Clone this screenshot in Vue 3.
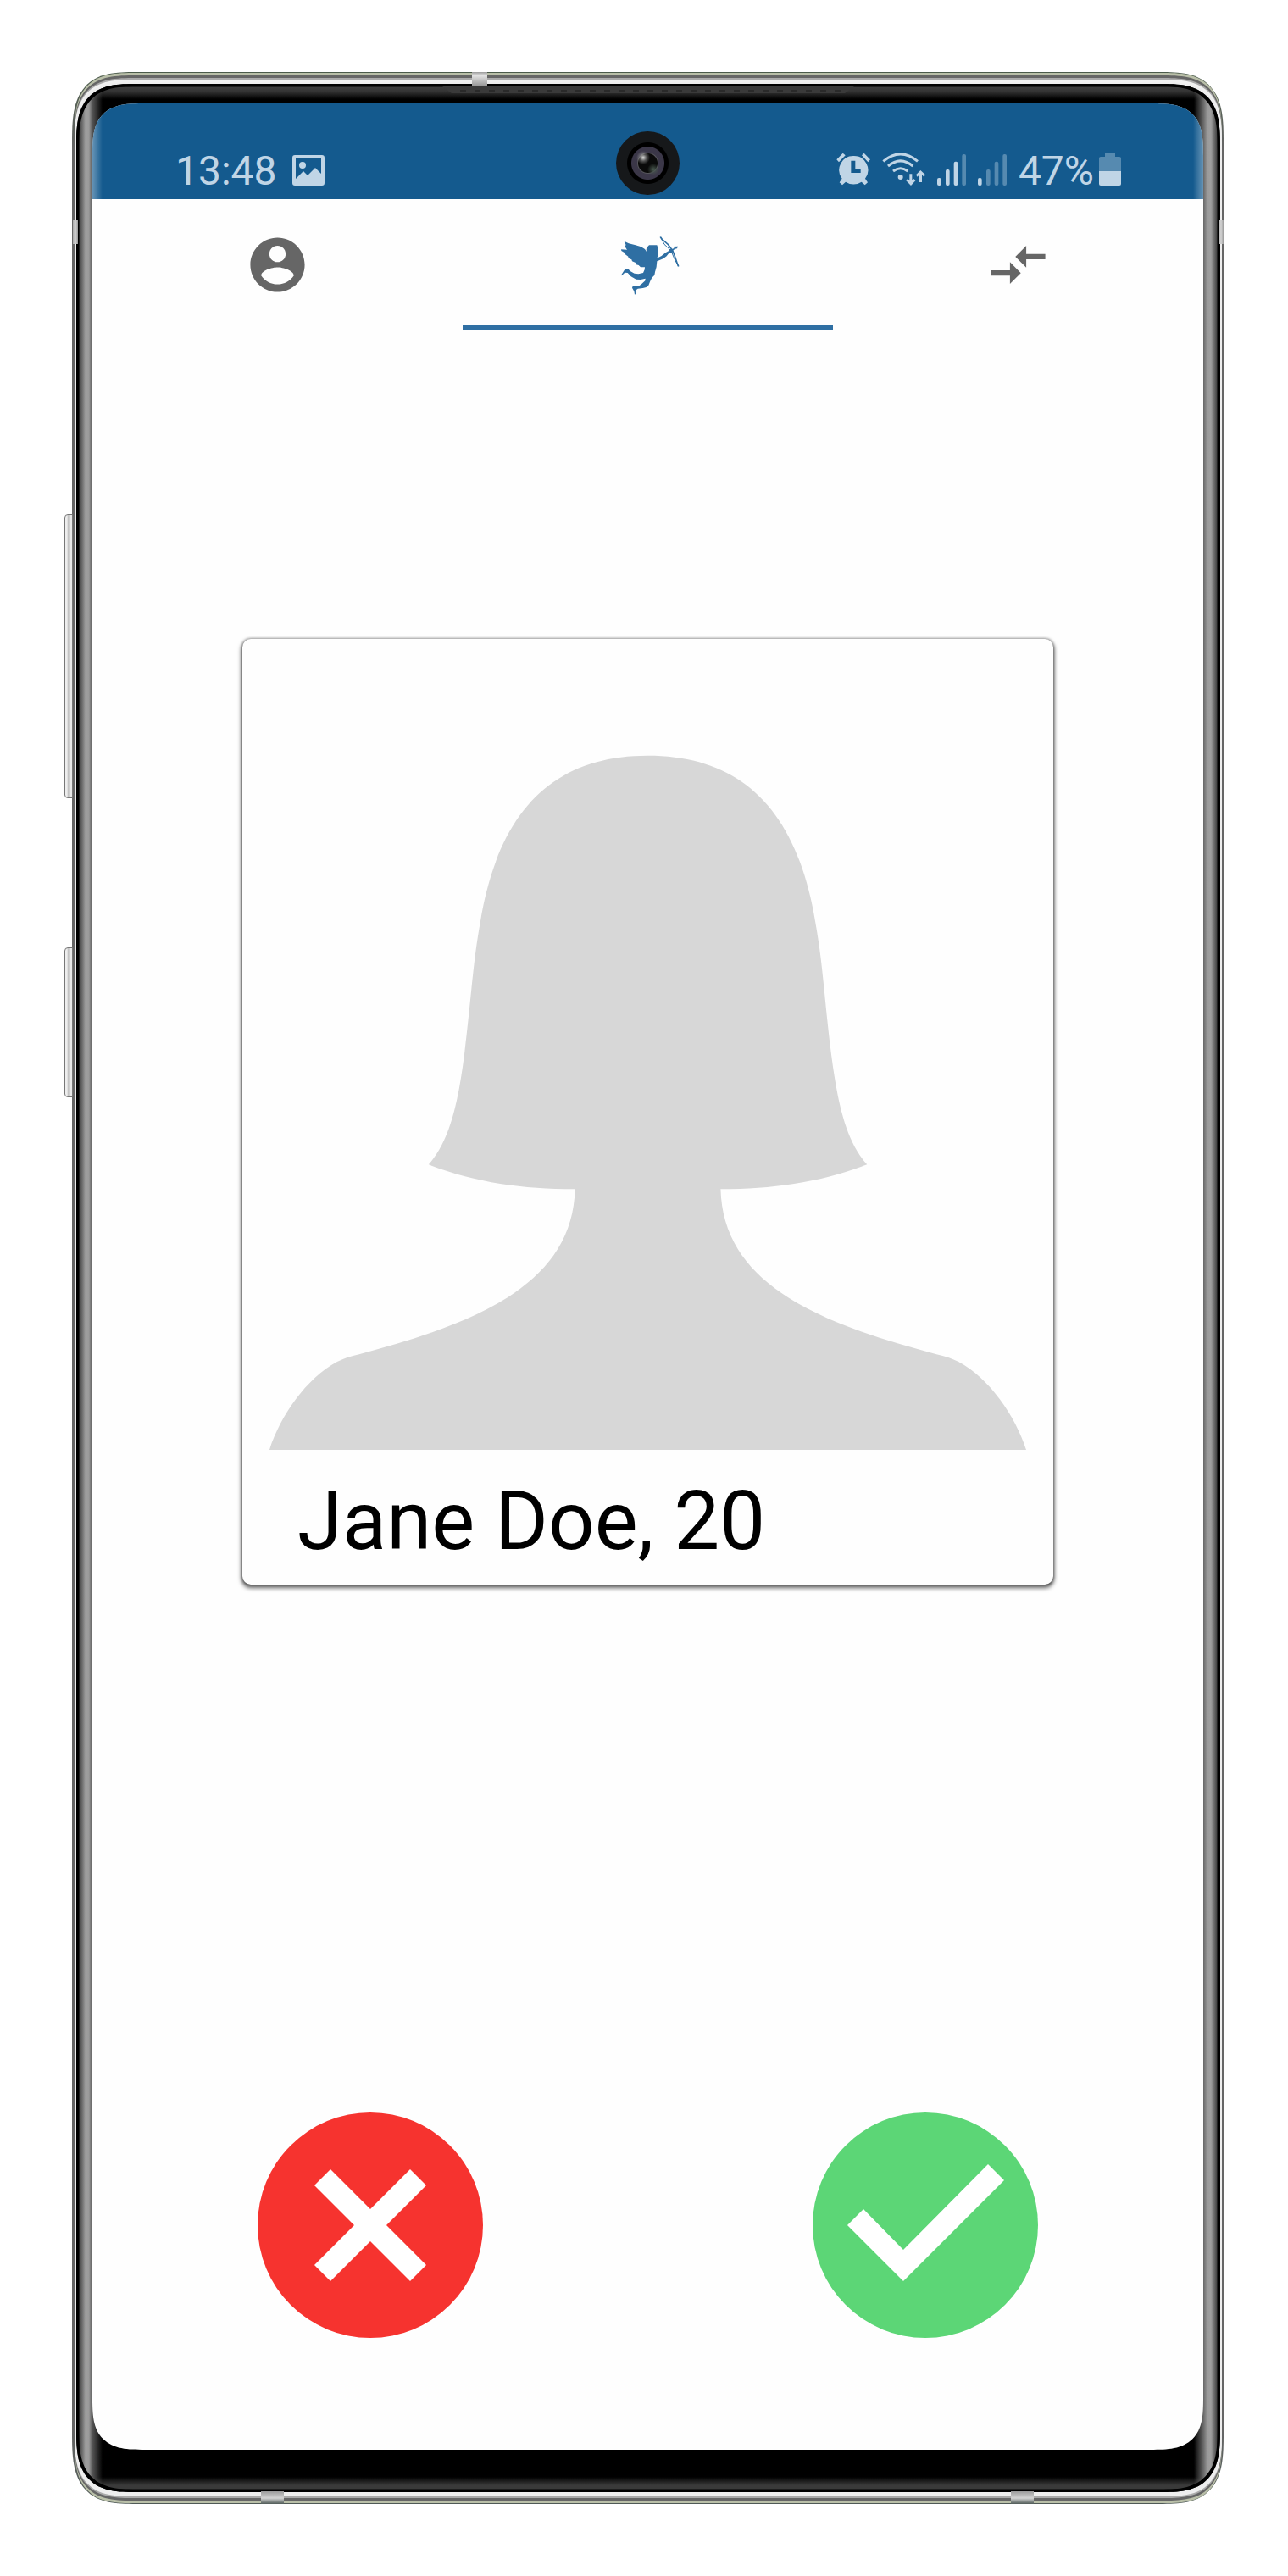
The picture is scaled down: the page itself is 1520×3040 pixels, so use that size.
<script setup>
import { ref } from 'vue'

const status = { time: '13:48', battery: '47%' }
const profile = { name: 'Jane Doe', age: 20 }
const tabs = [
  { id: 'profile', label: 'Profile' },
  { id: 'discover', label: 'Discover' },
  { id: 'matches', label: 'Matches' }
]
const active = ref('discover')
</script>

<template>
  <div class="stage">
    <div class="phone">
      <span class="key volume"></span>
      <span class="key power"></span>

      <div class="glass">
        <div class="screen">
          <header class="status">
            <div class="group">
              <span class="text">{{ status.time }}</span>
              <svg class="photo" viewBox="0 0 38 36" aria-hidden="true">
                <path fill-rule="evenodd" d="M3 0H35Q38 0 38 3V33Q38 36 35 36H3Q0 36 0 33V3Q0 0 3 0ZM4 4V28L13 19L18 24L27 15L34 22V4Z" />
                <circle cx="12" cy="12" r="4" />
              </svg>
            </div>
            <div class="group">
              <svg class="alarm" viewBox="78 90 120 117" aria-hidden="true">
                <path d="M79 115L101 92L110 100L87 124ZM198 115L176 92L168 100L190 124Z" />
                <path fill-rule="evenodd" d="M139 102A50 50 0 0 1 180 182L189 196L179 205L167 194A50 50 0 0 1 111 194L99 205L89 196L98 182A50 50 0 0 1 139 102ZM130 119V162H164V150H145V119Z" />
              </svg>
              <svg class="wifi" viewBox="243 90 153 117" aria-hidden="true">
                <g class="arc">
                  <path d="M247 121Q308 70 369 121" />
                  <path d="M264 138Q308 101 352 138" />
                  <path d="M282 156Q308 136 334 156" />
                </g>
                <circle cx="308" cy="177" r="9" />
                <path d="M340 166H349V190L356 183L361 190L345 207L328 190L333 183L340 190ZM374 195H384V169L391 176L396 169L379 153L363 169L368 176L374 169Z" />
              </svg>
              <svg class="signal" viewBox="0 0 102 111" aria-hidden="true">
                <rect x="0" y="84" width="14" height="27" rx="6" />
                <rect x="30" y="54" width="14" height="57" rx="6" />
                <rect x="59" y="26" width="14" height="85" rx="6" />
                <rect class="dim" x="88" y="0" width="14" height="111" rx="6" />
              </svg>
              <svg class="signal" viewBox="0 0 102 111" aria-hidden="true">
                <rect x="0" y="84" width="14" height="27" rx="6" />
                <rect class="dim" x="30" y="54" width="14" height="57" rx="6" />
                <rect class="dim" x="59" y="26" width="14" height="85" rx="6" />
                <rect class="dim" x="88" y="0" width="14" height="111" rx="6" />
              </svg>
              <div class="charge">
                <span class="text">{{ status.battery }}</span>
                <svg class="battery" viewBox="0 0 26 39" aria-hidden="true">
                  <path class="dim" d="M7 5V1Q7 0 8 0H18Q19 0 19 1V5H24Q26 5 26 7V22H0V7Q0 5 2 5Z" />
                  <path d="M0 22H26V37Q26 39 24 39H2Q0 39 0 37Z" />
                </svg>
              </div>
            </div>
          </header>

          <nav class="tabs">
            <button
              v-for="tab in tabs"
              :key="tab.id"
              type="button"
              class="tab"
              :class="{ active: active === tab.id }"
              :aria-label="tab.label"
              @click="active = tab.id"
            >
              <svg v-if="tab.id === 'profile'" viewBox="0 0 24 24">
                <path d="M12 2C6.48 2 2 6.48 2 12s4.48 10 10 10 10-4.48 10-10S17.52 2 12 2zm0 3c1.66 0 3 1.34 3 3s-1.34 3-3 3-3-1.34-3-3 1.34-3 3-3zm0 14.2c-2.5 0-4.71-1.28-6-3.22.03-1.99 4-3.08 6-3.08 1.99 0 5.97 1.09 6 3.08-1.29 1.94-3.5 3.22-6 3.22z" />
              </svg>
              <svg v-else-if="tab.id === 'discover'" viewBox="78 397 231 231">
                <path d="M110 429L126 437L150 443L170 449L183 457L189 466L188 457L193 448L198 443L226 443L230 455L231 470L228 483L226 489L242 481L256 470L268 463L272 456L282 457L284 466L276 471L268 471L260 482L248 491L226 500L224 520L219 538L217 549L208 558L202 570L196 585L188 592L176 595L158 597L152 602L150 616L147 618L145 606L138 594L140 588L160 589L172 580L184 569L185 561L168 565L152 564L134 554L122 541L112 540L101 551L99 549L110 532L117 526L124 527L130 534L146 543L160 545L177 541L182 530L183 521L168 521L161 514L150 511L150 505L138 500L136 494L125 489L124 483L113 475L110 469L100 463L99 458L120 459L111 446L116 443Z" />
                <path class="bow" d="M238 414C246 430 262 431 273 451C289 468 290 492 302 518" />
                <path class="string" d="M238 414L252 440L276 463L288 492L302 518" />
                <path d="M276 458L287 454L284 448L300 447L297 455L290 456L280 464Z" />
              </svg>
              <svg v-else viewBox="0 0 24 24">
                <path d="M9.01 14H2v2h7.01v3L13 15l-3.99-4v3zm5.98-1v-3H22V8h-7.01V5L11 9l3.99 4z" />
              </svg>
            </button>
          </nav>

          <main class="deck">
            <article class="card">
              <svg class="portrait" viewBox="0 0 958 958" role="img" aria-label="Profile picture">
                <path d="M479 138C370 138 303 200 281 335C272 385 271 420 262 493C255 545 246 592 220 621C275 642 330 650 393 650C390 762 278 808 138 845Q123 848 112 854C75 874 45 918 32 958H926C913 918 883 874 846 854Q835 848 820 845C680 808 568 762 565 650C628 650 683 642 738 621C712 592 703 545 696 493C687 420 686 385 677 335C655 200 588 138 479 138Z" />
              </svg>
              <h1 class="name">{{ profile.name }}, {{ profile.age }}</h1>
            </article>

            <div class="actions">
              <div class="slot">
                <button type="button" class="round no" aria-label="Pass">
                  <svg viewBox="0 0 266 266">
                    <path d="M86 67L133 114L180 67L199 86L152 133L199 180L180 199L133 152L86 199L67 180L114 133L67 86Z" />
                  </svg>
                </button>
              </div>
              <div class="slot">
                <button type="button" class="round yes" aria-label="Like">
                  <svg viewBox="0 0 266 266">
                    <path d="M41 133L60 114L107 162L207 61L226 80L107 199Z" />
                  </svg>
                </button>
              </div>
            </div>
          </main>
        </div>
        <span class="speaker"></span>
        <span class="camera"></span>
      </div>

      <span class="band side left"></span>
      <span class="band side right"></span>
      <span class="band top"></span>
      <span class="band bottom first"></span>
      <span class="band bottom second"></span>
    </div>
  </div>
</template>

<style>
body {
  margin: 0;
  background: #fff;
}
</style>

<style scoped>
.stage {
  padding: 85px 76px 85px 85px;
  font-family: Roboto, "Liberation Sans", sans-serif;
}
.phone {
  position: relative;
  padding: 14px 4px 14px 5px;
  border-radius: 52px / 60px;
  background: linear-gradient(#4a5a4a, #666 90px, #666 calc(100% - 90px), #4f5a56);
}
.glass {
  position: relative;
  padding: 23px 20px 50px 19px;
  border-radius: 48px / 52px;
  box-shadow:
    0 0 0 2px #eee,
    0 -3px 0 2px #f0f0f0,
    0 -5px 0 2px #aaa,
    0 -8px 0 2px #666,
    0 -11px 0 2px #b9bfa8,
    0 3px 0 2px #eee,
    0 5px 0 2px #aaa,
    0 8px 0 2px #666,
    0 11px 0 2px #b9bfa8;
  background: #000;
}
.glass::before {
  content: "";
  position: absolute;
  inset: 0;
  border-radius: inherit;
  box-shadow: inset 0 0 0 3px #000;
  background:
    linear-gradient(90deg, #000 3px, #444 4px, #9f9f9f 11px, #9a9a9a 15px, #555 19px, rgba(0, 0, 0, 0) 31px) left / 32px 100% no-repeat,
    linear-gradient(270deg, #000 3px, #444 4px, #9f9f9f 11px, #9a9a9a 15px, #666 20px, rgba(0, 0, 0, 0) 31px) right / 32px 100% no-repeat,
    linear-gradient(#000 3px, #3c3c3c 4px, #333 9px, #000 18px) top / 100% 20px no-repeat,
    linear-gradient(#000, #3a3a3a 10px, #3a3a3a 14px, #000 15px) bottom / 100% 18px no-repeat;
}
.screen {
  position: relative;
  border-radius: 42px;
  overflow: hidden;
  background: #fefefe;
}
@supports (corner-shape: superellipse(2)) {
  .phone {
    border-radius: 76px / 84px;
    corner-shape: superellipse(1.6);
  }
  .glass {
    border-radius: 72px / 76px;
    corner-shape: superellipse(1.6);
  }
  .glass::before {
    corner-shape: superellipse(1.6);
  }
  .screen {
    border-radius: 62px;
    corner-shape: superellipse(1.6);
  }
}

.status {
  display: flex;
  justify-content: space-between;
  align-items: flex-end;
  box-sizing: border-box;
  height: 113px;
  padding: 0 97px 16px 98px;
  color: #c0d5e6;
  background:
    linear-gradient(90deg, rgba(255, 255, 255, 0.35), rgba(255, 255, 255, 0) 12px),
    linear-gradient(270deg, rgba(255, 255, 255, 0.35), rgba(255, 255, 255, 0) 12px),
    #145a8e;
}
.group {
  display: flex;
  align-items: flex-end;
  gap: 14px;
}
.group:first-child {
  gap: 18px;
}
.charge {
  display: flex;
  align-items: flex-end;
  gap: 6px;
}
.text {
  font-size: 48px;
  line-height: 34px;
}
.status svg {
  display: block;
  fill: #c0d5e6;
}
.photo { width: 38px; height: 36px; }
.alarm { width: 40px; height: 39px; }
.wifi { width: 51px; height: 39px; }
.signal { width: 34px; height: 37px; }
.battery { width: 26px; height: 39px; }
.arc {
  fill: none;
  stroke: #c0d5e6;
  stroke-width: 9;
}
.status .dim {
  fill: #568ab0;
}

.tabs {
  display: flex;
}
.tab {
  flex: 1;
  display: flex;
  justify-content: center;
  align-items: center;
  box-sizing: border-box;
  height: 154px;
  padding: 6px 0 0;
  border: 0;
  border-bottom: 6px solid transparent;
  background: none;
  color: #666;
}
.tab.active {
  color: #2f6fa3;
  border-bottom-color: #2f6fa3;
}
.tab svg {
  width: 77px;
  height: 77px;
  fill: currentColor;
}
.tab .bow {
  fill: none;
  stroke: currentColor;
  stroke-width: 5;
}
.tab .string {
  fill: none;
  stroke: currentColor;
  stroke-width: 3;
}

.deck {
  display: flex;
  flex-direction: column;
  align-items: center;
  padding: 365px 0 132px;
}
.card {
  width: 73%;
  border-radius: 10px;
  background: #fefefe;
  box-shadow: 0 0 3px 1px rgba(0, 0, 0, 0.3), 0 3px 5px 1px rgba(0, 0, 0, 0.6);
}
.portrait {
  display: block;
  width: 100%;
  fill: #d7d7d7;
}
.name {
  margin: 0;
  padding: 36px 65px 27px;
  font-size: 96px;
  line-height: 96px;
  font-weight: 400;
  color: #000;
}
.actions {
  display: flex;
  align-self: stretch;
  margin-top: 623px;
}
.slot {
  flex: 1;
  display: flex;
  justify-content: center;
}
.round {
  width: 266px;
  height: 266px;
  padding: 0;
  border: 0;
  border-radius: 50%;
}
.round svg {
  display: block;
  fill: #fff;
}
.no { background: #f6332f; }
.yes { background: #5cd676; }

.camera {
  position: absolute;
  top: 56px;
  left: 50%;
  width: 75px;
  height: 75px;
  margin-left: -38px;
  border-radius: 50%;
  background:
    radial-gradient(circle at 32px 31px, #ddd 0, rgba(160, 160, 160, 0.5) 4px, rgba(0, 0, 0, 0) 8px),
    radial-gradient(circle at 44px 45px, #4a5a50 0, rgba(0, 0, 0, 0) 7px),
    radial-gradient(circle at center, #0a0a0a 11px, #55555a 12px, #3b3748 13px, #3b3748 19px, #000 20px, #000 24px, #16181a 25px);
}
.speaker {
  position: absolute;
  top: 3px;
  left: 50%;
  width: 486px;
  height: 8px;
  margin-left: -243px;
  clip-path: polygon(0 0, 100% 0, 475px 100%, 11px 100%);
  background:
    repeating-linear-gradient(90deg, transparent 0 10px, #2a2a2a 10px 17px) 11px 4px / 460px 2px no-repeat,
    #3a3a3a;
}
.key {
  position: absolute;
  left: -9px;
  box-sizing: border-box;
  width: 10px;
  border: 1px solid #777;
  border-radius: 4px 0 0 4px;
  background: linear-gradient(90deg, #eee 2px, #b5b5b5 4px, #b5b5b5 5px, #e8e8e8 6px);
}
.volume { top: 522px; height: 335px; }
.power { top: 1033px; height: 177px; }
.band {
  position: absolute;
  background: #c4c4c4;
}
.side {
  top: 175px;
  width: 6px;
  height: 28px;
  background: linear-gradient(90deg, #aaa, #d5d5d5, #999);
}
.left { left: 1px; }
.right { right: 0; }
.top {
  top: 0;
  left: 472px;
  width: 18px;
  height: 16px;
  background: linear-gradient(#999, #e4e4e4 4px, #999);
}
.bottom {
  bottom: 0;
  width: 27px;
  height: 15px;
  background: linear-gradient(#999, #d4d4d4 8px, #4f5a56);
}
.first { left: 223px; }
.second { right: 224px; }
</style>
